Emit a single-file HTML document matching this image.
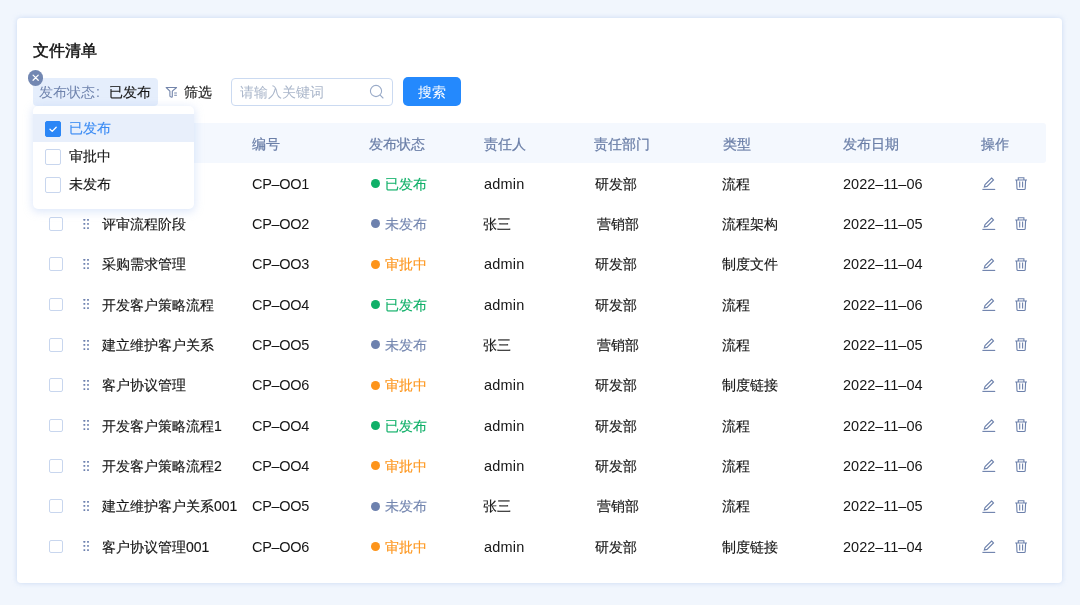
<!DOCTYPE html>
<html><head><meta charset="utf-8">
<style>
*{margin:0;padding:0;box-sizing:border-box}
html,body{width:1080px;height:605px;overflow:hidden;background:#f1f6fd;font-family:"Liberation Sans",sans-serif;color:#1f1f1f}
.card{position:absolute;left:17px;top:18px;width:1045px;height:565px;background:#fff;border-radius:4px;box-shadow:0 0 5px 0 rgba(175,198,238,.6)}
.abs{position:absolute;white-space:nowrap}
.title{left:33px;top:39.5px;font-size:16px;font-weight:normal;-webkit-text-stroke:0.45px #111;color:#111;line-height:22px}
.tag{left:33px;top:78px;width:125px;height:27.5px;background:#e5eefc;border-radius:4px;font-size:14px;line-height:28.6px;padding-left:6px}
.tag .k{color:#6f83ad}
.tag .v{color:#161616;-webkit-text-stroke:0.15px #161616}
.close{left:27.6px;top:70.3px;width:15.3px;height:15.3px;border-radius:50%;background:#7287b2}
.filter{left:165px;top:86px}
.ftext{left:184px;top:81.5px;font-size:14px;line-height:20px;color:#161616;-webkit-text-stroke:0.15px #161616}
.input{left:231px;top:77.5px;width:162px;height:28px;border:1px solid #cbdaf1;border-radius:4px;background:#fff}
.input .ph{position:absolute;left:8px;top:0.5px;line-height:26px;font-size:14px;color:#aab6ca}
.btn{left:403px;top:77.2px;width:58px;height:28.6px;background:#2489fd;border-radius:5px;color:#fff;font-size:14px;line-height:28px;padding-top:1px;text-align:center}
.thead{left:33px;top:123px;width:1013px;height:40px;background:#f4f8fe;border-radius:3px}
.th{font-size:14px;line-height:20px;-webkit-text-stroke:0.25px #6b7fa8;color:#6b7fa8;top:133.5px}
.row{position:absolute;left:33px;width:1013px;height:40px}
.cb{position:absolute;left:16px;top:13.8px;width:13.6px;height:13.6px;border:1px solid #c8d6ee;border-radius:2px;background:#fff}
.dh{position:absolute;left:50px;top:15.4px}
.td{position:absolute;font-size:14px;line-height:20px;top:10.6px;color:#161616;white-space:nowrap}
.td{-webkit-text-stroke:0.15px currentColor}
.lat{font-size:14.5px;letter-spacing:0.2px;-webkit-text-stroke:0}
.st .dot{display:inline-block;width:9px;height:9px;border-radius:50%;vertical-align:middle;margin-right:5.3px;position:relative;top:-1.3px;left:-0.4px}
.g{color:#12b06a}.g .dot{background:#0fb068}
.s{color:#7587b0}.s .dot{background:#6d81ae}
.o{color:#fd961e}.o .dot{background:#fd941a}
.ops{position:absolute;left:949px;top:14px}
.dd{left:33px;top:106px;width:161px;height:103px;background:#fff;border-radius:5px;box-shadow:0 2px 8px 1px rgba(160,190,240,.35)}
.dd .it{position:absolute;left:0;width:161px;height:28px;font-size:14px;line-height:28px}
.dd .it.sel{background:#e8effb;color:#3a8af5}
.dd .ck{position:absolute;left:12px;top:6.5px;width:16px;height:16px;border:1px solid #c8d6ee;border-radius:2px;background:#fff}
.dd .sel .ck{background:#2b86f6;border-color:#2b86f6}
.dd .lbl{position:absolute;left:36px;top:0.3px;-webkit-text-stroke:0.15px currentColor;color:#161616}
.dd .sel .lbl{color:#3c8cf4}
</style></head><body>
<div class="card"></div>
<div id="wrap" style="position:absolute;left:0;top:0;width:1080px;height:605px;will-change:transform">
<div class="abs title">文件清单</div>
<div class="abs tag"><span class="k">发布状态<span style="margin-left:1px">:</span></span><span style="display:inline-block;width:9px"></span><span class="v">已发布</span></div>
<div class="abs close"><svg width="15.3" height="15.3" viewBox="0 0 16 16" style="position:absolute;left:0;top:0"><path d="M5.3 5.3L10.7 10.7M10.7 5.3L5.3 10.7" stroke="#fff" stroke-width="1.3" stroke-linecap="round"/></svg></div>
<svg class="abs filter" width="13" height="13" viewBox="0 0 13 13"><path d="M1.2 1.5H11.6L7.3 5.1V10.3Q7.3 11.3 6.4 11.1L5.6 10.8Q4.9 10.5 4.9 9.8V5.1Z" fill="none" stroke="#7385ab" stroke-width="1.1" stroke-linejoin="round"/><path d="M9.2 7H11.9M9.2 9.2H11.9" stroke="#7385ab" stroke-width="1.1"/></svg>
<div class="abs ftext">筛选</div>
<div class="abs input"><span class="ph">请输入关键词</span><svg style="position:absolute;left:137px;top:5px" width="16" height="16" viewBox="0 0 16 16"><circle cx="7" cy="7" r="5.6" fill="none" stroke="#9aabc8" stroke-width="1.1"/><path d="M11.2 11.2L14 14" stroke="#9aabc8" stroke-width="1.1" stroke-linecap="round"/></svg></div>
<div class="abs btn">搜索</div>
<div class="abs thead"></div>
<div class="abs th" style="left:102px">文件名称</div>
<div class="abs th" style="left:252px">编号</div>
<div class="abs th" style="left:369px">发布状态</div>
<div class="abs th" style="left:484px">责任人</div>
<div class="abs th" style="left:594px">责任部门</div>
<div class="abs th" style="left:723px">类型</div>
<div class="abs th" style="left:843px">发布日期</div>
<div class="abs th" style="left:981px">操作</div>
<div id="rows"><div class="row" style="top:163.00px"><span class="cb"></span><svg class="dh" width="7" height="11" viewBox="0 0 7 11"><g fill="#6c80ae"><rect x="0.45" y="-0.05" width="1.8" height="1.8" rx="0.35"/><rect x="4.10" y="-0.05" width="1.8" height="1.8" rx="0.35"/><rect x="0.45" y="4.05" width="1.8" height="1.8" rx="0.35"/><rect x="4.10" y="4.05" width="1.8" height="1.8" rx="0.35"/><rect x="0.45" y="8.15" width="1.8" height="1.8" rx="0.35"/><rect x="4.10" y="8.15" width="1.8" height="1.8" rx="0.35"/></g></svg><span class="td" style="left:69px">文件名称A</span><span class="td lat" style="left:219px;letter-spacing:-0.3px">CP–OO1</span><span class="td st g" style="left:338px"><span class="dot"></span>已发布</span><span class="td lat" style="left:451px">admin</span><span class="td" style="left:562px">研发部</span><span class="td" style="left:689px">流程</span><span class="td lat" style="left:810px;letter-spacing:0px">2022–11–06</span><svg class="ops" width="50" height="16" viewBox="0 0 50 16"><path d="M9.6 1.0L11.5 2.9L5.0 9.4L2.3 10.0L3.0 7.6Z" fill="none" stroke="#6c80ab" stroke-width="1.1" stroke-linejoin="miter"/><path d="M0.4 12.4H13.2" stroke="#6c80ab" stroke-width="1.1"/><g fill="none" stroke="#6c80ab" stroke-width="1.1"><path d="M33.2 3.0H45M36.3 3.0V0.8H41.9V3.0M34.6 3.4L35.0 11.6Q35.1 12.5 35.9 12.5H42.3Q43.1 12.5 43.2 11.6L43.6 3.4M37.7 4.6V10.6M40.6 4.6V10.6"/></g></svg></div>
<div class="row" style="top:203.33px"><span class="cb"></span><svg class="dh" width="7" height="11" viewBox="0 0 7 11"><g fill="#6c80ae"><rect x="0.45" y="-0.05" width="1.8" height="1.8" rx="0.35"/><rect x="4.10" y="-0.05" width="1.8" height="1.8" rx="0.35"/><rect x="0.45" y="4.05" width="1.8" height="1.8" rx="0.35"/><rect x="4.10" y="4.05" width="1.8" height="1.8" rx="0.35"/><rect x="0.45" y="8.15" width="1.8" height="1.8" rx="0.35"/><rect x="4.10" y="8.15" width="1.8" height="1.8" rx="0.35"/></g></svg><span class="td" style="left:69px">评审流程阶段</span><span class="td lat" style="left:219px;letter-spacing:-0.3px">CP–OO2</span><span class="td st s" style="left:338px"><span class="dot"></span>未发布</span><span class="td" style="left:450px">张三</span><span class="td" style="left:564px">营销部</span><span class="td" style="left:689px">流程架构</span><span class="td lat" style="left:810px;letter-spacing:0px">2022–11–05</span><svg class="ops" width="50" height="16" viewBox="0 0 50 16"><path d="M9.6 1.0L11.5 2.9L5.0 9.4L2.3 10.0L3.0 7.6Z" fill="none" stroke="#6c80ab" stroke-width="1.1" stroke-linejoin="miter"/><path d="M0.4 12.4H13.2" stroke="#6c80ab" stroke-width="1.1"/><g fill="none" stroke="#6c80ab" stroke-width="1.1"><path d="M33.2 3.0H45M36.3 3.0V0.8H41.9V3.0M34.6 3.4L35.0 11.6Q35.1 12.5 35.9 12.5H42.3Q43.1 12.5 43.2 11.6L43.6 3.4M37.7 4.6V10.6M40.6 4.6V10.6"/></g></svg></div>
<div class="row" style="top:243.66px"><span class="cb"></span><svg class="dh" width="7" height="11" viewBox="0 0 7 11"><g fill="#6c80ae"><rect x="0.45" y="-0.05" width="1.8" height="1.8" rx="0.35"/><rect x="4.10" y="-0.05" width="1.8" height="1.8" rx="0.35"/><rect x="0.45" y="4.05" width="1.8" height="1.8" rx="0.35"/><rect x="4.10" y="4.05" width="1.8" height="1.8" rx="0.35"/><rect x="0.45" y="8.15" width="1.8" height="1.8" rx="0.35"/><rect x="4.10" y="8.15" width="1.8" height="1.8" rx="0.35"/></g></svg><span class="td" style="left:69px">采购需求管理</span><span class="td lat" style="left:219px;letter-spacing:-0.3px">CP–OO3</span><span class="td st o" style="left:338px"><span class="dot"></span>审批中</span><span class="td lat" style="left:451px">admin</span><span class="td" style="left:562px">研发部</span><span class="td" style="left:689px">制度文件</span><span class="td lat" style="left:810px;letter-spacing:0px">2022–11–04</span><svg class="ops" width="50" height="16" viewBox="0 0 50 16"><path d="M9.6 1.0L11.5 2.9L5.0 9.4L2.3 10.0L3.0 7.6Z" fill="none" stroke="#6c80ab" stroke-width="1.1" stroke-linejoin="miter"/><path d="M0.4 12.4H13.2" stroke="#6c80ab" stroke-width="1.1"/><g fill="none" stroke="#6c80ab" stroke-width="1.1"><path d="M33.2 3.0H45M36.3 3.0V0.8H41.9V3.0M34.6 3.4L35.0 11.6Q35.1 12.5 35.9 12.5H42.3Q43.1 12.5 43.2 11.6L43.6 3.4M37.7 4.6V10.6M40.6 4.6V10.6"/></g></svg></div>
<div class="row" style="top:283.99px"><span class="cb"></span><svg class="dh" width="7" height="11" viewBox="0 0 7 11"><g fill="#6c80ae"><rect x="0.45" y="-0.05" width="1.8" height="1.8" rx="0.35"/><rect x="4.10" y="-0.05" width="1.8" height="1.8" rx="0.35"/><rect x="0.45" y="4.05" width="1.8" height="1.8" rx="0.35"/><rect x="4.10" y="4.05" width="1.8" height="1.8" rx="0.35"/><rect x="0.45" y="8.15" width="1.8" height="1.8" rx="0.35"/><rect x="4.10" y="8.15" width="1.8" height="1.8" rx="0.35"/></g></svg><span class="td" style="left:69px">开发客户策略流程</span><span class="td lat" style="left:219px;letter-spacing:-0.3px">CP–OO4</span><span class="td st g" style="left:338px"><span class="dot"></span>已发布</span><span class="td lat" style="left:451px">admin</span><span class="td" style="left:562px">研发部</span><span class="td" style="left:689px">流程</span><span class="td lat" style="left:810px;letter-spacing:0px">2022–11–06</span><svg class="ops" width="50" height="16" viewBox="0 0 50 16"><path d="M9.6 1.0L11.5 2.9L5.0 9.4L2.3 10.0L3.0 7.6Z" fill="none" stroke="#6c80ab" stroke-width="1.1" stroke-linejoin="miter"/><path d="M0.4 12.4H13.2" stroke="#6c80ab" stroke-width="1.1"/><g fill="none" stroke="#6c80ab" stroke-width="1.1"><path d="M33.2 3.0H45M36.3 3.0V0.8H41.9V3.0M34.6 3.4L35.0 11.6Q35.1 12.5 35.9 12.5H42.3Q43.1 12.5 43.2 11.6L43.6 3.4M37.7 4.6V10.6M40.6 4.6V10.6"/></g></svg></div>
<div class="row" style="top:324.32px"><span class="cb"></span><svg class="dh" width="7" height="11" viewBox="0 0 7 11"><g fill="#6c80ae"><rect x="0.45" y="-0.05" width="1.8" height="1.8" rx="0.35"/><rect x="4.10" y="-0.05" width="1.8" height="1.8" rx="0.35"/><rect x="0.45" y="4.05" width="1.8" height="1.8" rx="0.35"/><rect x="4.10" y="4.05" width="1.8" height="1.8" rx="0.35"/><rect x="0.45" y="8.15" width="1.8" height="1.8" rx="0.35"/><rect x="4.10" y="8.15" width="1.8" height="1.8" rx="0.35"/></g></svg><span class="td" style="left:69px">建立维护客户关系</span><span class="td lat" style="left:219px;letter-spacing:-0.3px">CP–OO5</span><span class="td st s" style="left:338px"><span class="dot"></span>未发布</span><span class="td" style="left:450px">张三</span><span class="td" style="left:564px">营销部</span><span class="td" style="left:689px">流程</span><span class="td lat" style="left:810px;letter-spacing:0px">2022–11–05</span><svg class="ops" width="50" height="16" viewBox="0 0 50 16"><path d="M9.6 1.0L11.5 2.9L5.0 9.4L2.3 10.0L3.0 7.6Z" fill="none" stroke="#6c80ab" stroke-width="1.1" stroke-linejoin="miter"/><path d="M0.4 12.4H13.2" stroke="#6c80ab" stroke-width="1.1"/><g fill="none" stroke="#6c80ab" stroke-width="1.1"><path d="M33.2 3.0H45M36.3 3.0V0.8H41.9V3.0M34.6 3.4L35.0 11.6Q35.1 12.5 35.9 12.5H42.3Q43.1 12.5 43.2 11.6L43.6 3.4M37.7 4.6V10.6M40.6 4.6V10.6"/></g></svg></div>
<div class="row" style="top:364.65px"><span class="cb"></span><svg class="dh" width="7" height="11" viewBox="0 0 7 11"><g fill="#6c80ae"><rect x="0.45" y="-0.05" width="1.8" height="1.8" rx="0.35"/><rect x="4.10" y="-0.05" width="1.8" height="1.8" rx="0.35"/><rect x="0.45" y="4.05" width="1.8" height="1.8" rx="0.35"/><rect x="4.10" y="4.05" width="1.8" height="1.8" rx="0.35"/><rect x="0.45" y="8.15" width="1.8" height="1.8" rx="0.35"/><rect x="4.10" y="8.15" width="1.8" height="1.8" rx="0.35"/></g></svg><span class="td" style="left:69px">客户协议管理</span><span class="td lat" style="left:219px;letter-spacing:-0.3px">CP–OO6</span><span class="td st o" style="left:338px"><span class="dot"></span>审批中</span><span class="td lat" style="left:451px">admin</span><span class="td" style="left:562px">研发部</span><span class="td" style="left:689px">制度链接</span><span class="td lat" style="left:810px;letter-spacing:0px">2022–11–04</span><svg class="ops" width="50" height="16" viewBox="0 0 50 16"><path d="M9.6 1.0L11.5 2.9L5.0 9.4L2.3 10.0L3.0 7.6Z" fill="none" stroke="#6c80ab" stroke-width="1.1" stroke-linejoin="miter"/><path d="M0.4 12.4H13.2" stroke="#6c80ab" stroke-width="1.1"/><g fill="none" stroke="#6c80ab" stroke-width="1.1"><path d="M33.2 3.0H45M36.3 3.0V0.8H41.9V3.0M34.6 3.4L35.0 11.6Q35.1 12.5 35.9 12.5H42.3Q43.1 12.5 43.2 11.6L43.6 3.4M37.7 4.6V10.6M40.6 4.6V10.6"/></g></svg></div>
<div class="row" style="top:404.98px"><span class="cb"></span><svg class="dh" width="7" height="11" viewBox="0 0 7 11"><g fill="#6c80ae"><rect x="0.45" y="-0.05" width="1.8" height="1.8" rx="0.35"/><rect x="4.10" y="-0.05" width="1.8" height="1.8" rx="0.35"/><rect x="0.45" y="4.05" width="1.8" height="1.8" rx="0.35"/><rect x="4.10" y="4.05" width="1.8" height="1.8" rx="0.35"/><rect x="0.45" y="8.15" width="1.8" height="1.8" rx="0.35"/><rect x="4.10" y="8.15" width="1.8" height="1.8" rx="0.35"/></g></svg><span class="td" style="left:69px">开发客户策略流程1</span><span class="td lat" style="left:219px;letter-spacing:-0.3px">CP–OO4</span><span class="td st g" style="left:338px"><span class="dot"></span>已发布</span><span class="td lat" style="left:451px">admin</span><span class="td" style="left:562px">研发部</span><span class="td" style="left:689px">流程</span><span class="td lat" style="left:810px;letter-spacing:0px">2022–11–06</span><svg class="ops" width="50" height="16" viewBox="0 0 50 16"><path d="M9.6 1.0L11.5 2.9L5.0 9.4L2.3 10.0L3.0 7.6Z" fill="none" stroke="#6c80ab" stroke-width="1.1" stroke-linejoin="miter"/><path d="M0.4 12.4H13.2" stroke="#6c80ab" stroke-width="1.1"/><g fill="none" stroke="#6c80ab" stroke-width="1.1"><path d="M33.2 3.0H45M36.3 3.0V0.8H41.9V3.0M34.6 3.4L35.0 11.6Q35.1 12.5 35.9 12.5H42.3Q43.1 12.5 43.2 11.6L43.6 3.4M37.7 4.6V10.6M40.6 4.6V10.6"/></g></svg></div>
<div class="row" style="top:445.31px"><span class="cb"></span><svg class="dh" width="7" height="11" viewBox="0 0 7 11"><g fill="#6c80ae"><rect x="0.45" y="-0.05" width="1.8" height="1.8" rx="0.35"/><rect x="4.10" y="-0.05" width="1.8" height="1.8" rx="0.35"/><rect x="0.45" y="4.05" width="1.8" height="1.8" rx="0.35"/><rect x="4.10" y="4.05" width="1.8" height="1.8" rx="0.35"/><rect x="0.45" y="8.15" width="1.8" height="1.8" rx="0.35"/><rect x="4.10" y="8.15" width="1.8" height="1.8" rx="0.35"/></g></svg><span class="td" style="left:69px">开发客户策略流程2</span><span class="td lat" style="left:219px;letter-spacing:-0.3px">CP–OO4</span><span class="td st o" style="left:338px"><span class="dot"></span>审批中</span><span class="td lat" style="left:451px">admin</span><span class="td" style="left:562px">研发部</span><span class="td" style="left:689px">流程</span><span class="td lat" style="left:810px;letter-spacing:0px">2022–11–06</span><svg class="ops" width="50" height="16" viewBox="0 0 50 16"><path d="M9.6 1.0L11.5 2.9L5.0 9.4L2.3 10.0L3.0 7.6Z" fill="none" stroke="#6c80ab" stroke-width="1.1" stroke-linejoin="miter"/><path d="M0.4 12.4H13.2" stroke="#6c80ab" stroke-width="1.1"/><g fill="none" stroke="#6c80ab" stroke-width="1.1"><path d="M33.2 3.0H45M36.3 3.0V0.8H41.9V3.0M34.6 3.4L35.0 11.6Q35.1 12.5 35.9 12.5H42.3Q43.1 12.5 43.2 11.6L43.6 3.4M37.7 4.6V10.6M40.6 4.6V10.6"/></g></svg></div>
<div class="row" style="top:485.64px"><span class="cb"></span><svg class="dh" width="7" height="11" viewBox="0 0 7 11"><g fill="#6c80ae"><rect x="0.45" y="-0.05" width="1.8" height="1.8" rx="0.35"/><rect x="4.10" y="-0.05" width="1.8" height="1.8" rx="0.35"/><rect x="0.45" y="4.05" width="1.8" height="1.8" rx="0.35"/><rect x="4.10" y="4.05" width="1.8" height="1.8" rx="0.35"/><rect x="0.45" y="8.15" width="1.8" height="1.8" rx="0.35"/><rect x="4.10" y="8.15" width="1.8" height="1.8" rx="0.35"/></g></svg><span class="td" style="left:69px">建立维护客户关系001</span><span class="td lat" style="left:219px;letter-spacing:-0.3px">CP–OO5</span><span class="td st s" style="left:338px"><span class="dot"></span>未发布</span><span class="td" style="left:450px">张三</span><span class="td" style="left:564px">营销部</span><span class="td" style="left:689px">流程</span><span class="td lat" style="left:810px;letter-spacing:0px">2022–11–05</span><svg class="ops" width="50" height="16" viewBox="0 0 50 16"><path d="M9.6 1.0L11.5 2.9L5.0 9.4L2.3 10.0L3.0 7.6Z" fill="none" stroke="#6c80ab" stroke-width="1.1" stroke-linejoin="miter"/><path d="M0.4 12.4H13.2" stroke="#6c80ab" stroke-width="1.1"/><g fill="none" stroke="#6c80ab" stroke-width="1.1"><path d="M33.2 3.0H45M36.3 3.0V0.8H41.9V3.0M34.6 3.4L35.0 11.6Q35.1 12.5 35.9 12.5H42.3Q43.1 12.5 43.2 11.6L43.6 3.4M37.7 4.6V10.6M40.6 4.6V10.6"/></g></svg></div>
<div class="row" style="top:525.97px"><span class="cb"></span><svg class="dh" width="7" height="11" viewBox="0 0 7 11"><g fill="#6c80ae"><rect x="0.45" y="-0.05" width="1.8" height="1.8" rx="0.35"/><rect x="4.10" y="-0.05" width="1.8" height="1.8" rx="0.35"/><rect x="0.45" y="4.05" width="1.8" height="1.8" rx="0.35"/><rect x="4.10" y="4.05" width="1.8" height="1.8" rx="0.35"/><rect x="0.45" y="8.15" width="1.8" height="1.8" rx="0.35"/><rect x="4.10" y="8.15" width="1.8" height="1.8" rx="0.35"/></g></svg><span class="td" style="left:69px">客户协议管理001</span><span class="td lat" style="left:219px;letter-spacing:-0.3px">CP–OO6</span><span class="td st o" style="left:338px"><span class="dot"></span>审批中</span><span class="td lat" style="left:451px">admin</span><span class="td" style="left:562px">研发部</span><span class="td" style="left:689px">制度链接</span><span class="td lat" style="left:810px;letter-spacing:0px">2022–11–04</span><svg class="ops" width="50" height="16" viewBox="0 0 50 16"><path d="M9.6 1.0L11.5 2.9L5.0 9.4L2.3 10.0L3.0 7.6Z" fill="none" stroke="#6c80ab" stroke-width="1.1" stroke-linejoin="miter"/><path d="M0.4 12.4H13.2" stroke="#6c80ab" stroke-width="1.1"/><g fill="none" stroke="#6c80ab" stroke-width="1.1"><path d="M33.2 3.0H45M36.3 3.0V0.8H41.9V3.0M34.6 3.4L35.0 11.6Q35.1 12.5 35.9 12.5H42.3Q43.1 12.5 43.2 11.6L43.6 3.4M37.7 4.6V10.6M40.6 4.6V10.6"/></g></svg></div></div><!--/rows-->
<div class="abs dd">
  <div class="it sel" style="top:8px"><span class="ck"><svg width="14" height="14" viewBox="0 0 14 14" style="position:absolute;left:0;top:0"><path d="M4 7.3L6.2 9.4L10.2 5.2" fill="none" stroke="#fff" stroke-width="1.3" stroke-linecap="round" stroke-linejoin="round"/></svg></span><span class="lbl">已发布</span></div>
  <div class="it" style="top:36px"><span class="ck"></span><span class="lbl">审批中</span></div>
  <div class="it" style="top:64px"><span class="ck"></span><span class="lbl">未发布</span></div>
</div>
</div>
</body></html>
